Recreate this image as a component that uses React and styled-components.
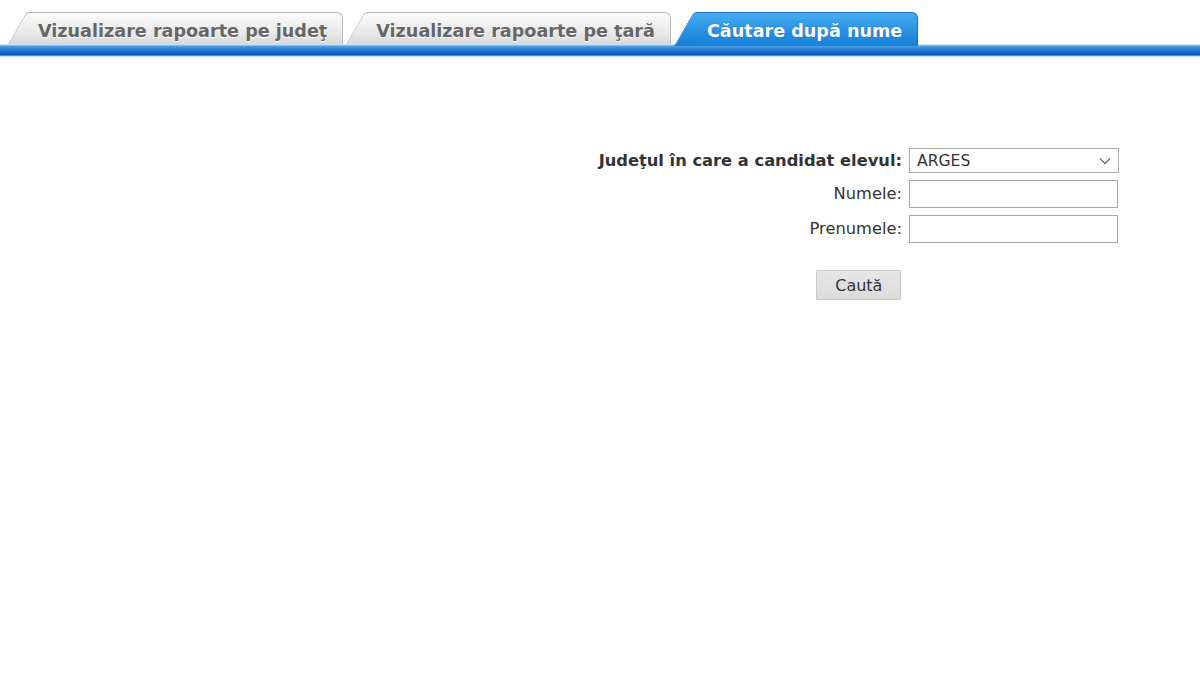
import styled, { createGlobalStyle } from "styled-components";

const GlobalStyle = createGlobalStyle`
  html, body {
    margin: 0;
    padding: 0;
    background: #ffffff;
    font-family: "DejaVu Sans", Verdana, sans-serif;
  }
`;

const tabs = [
  { id: "judet", label: "Vizualizare rapoarte pe judeţ" },
  { id: "tara", label: "Vizualizare rapoarte pe ţară" },
  { id: "nume", label: "Căutare după nume", active: true },
];

function Chevron() {
  return (
    <svg width="12" height="8" viewBox="0 0 12 8" fill="none">
      <path d="M1 1.5l5 5 5-5" stroke="#6d6d6d" strokeWidth="1.3" />
    </svg>
  );
}

export default function App() {
  return (
    <Page>
      <GlobalStyle />
      <TabStrip>
        {tabs.map((t) => (
          <Tab key={t.id} $active={t.active}>
            {t.label}
          </Tab>
        ))}
      </TabStrip>
      <Bar />

      <FormArea>
        <FormGrid>
          <Label $bold>Judeţul în care a candidat elevul:</Label>
          <SelectWrap>
            <Select defaultValue="ARGES">
              <option>ARGES</option>
            </Select>
            <Arrow>
              <Chevron />
            </Arrow>
          </SelectWrap>

          <Label>Numele:</Label>
          <Input type="text" />

          <Label>Prenumele:</Label>
          <Input type="text" />

          <ButtonRow>
            <Button>Caută</Button>
          </ButtonRow>
        </FormGrid>
      </FormArea>
    </Page>
  );
}

const Page = styled.div`
  width: 100%;
  min-height: 675px;
  padding-top: 12px;
  box-sizing: border-box;
`;

const TabStrip = styled.div`
  display: flex;
  align-items: flex-end;
  gap: 3px;
  padding-left: 8px;
  height: 32px;
`;

const Tab = styled.div`
  position: relative;
  z-index: ${({ $active }) => ($active ? 1 : 0)};
  height: ${({ $active }) => ($active ? "34px" : "32px")};
  margin-bottom: ${({ $active }) => ($active ? "-2px" : "0")};
  padding: ${({ $active }) => ($active ? "0 16px 2px 33px" : "0 16px 0 30px")};
  box-sizing: border-box;
  display: flex;
  align-items: center;
  padding-top: 5px;
  font-family: "DejaVu Sans", Verdana, sans-serif;
  font-weight: bold;
  font-size: 17.6px;
  white-space: nowrap;
  color: ${({ $active }) => ($active ? "#ffffff" : "#666666")};
  text-shadow: ${({ $active }) =>
    $active ? "0 0 1px rgba(0,60,130,0.4)" : "0 1px 0 #ffffff"};

  &::before,
  &::after {
    content: "";
    position: absolute;
    top: 0;
    bottom: 0;
    z-index: -1;
    box-sizing: border-box;
    background: ${({ $active }) =>
      $active
        ? "linear-gradient(#48aef0 0%, #2d95e6 45%, #1580d8 100%)"
        : "linear-gradient(#fbfbfb 0%, #ededed 50%, #d9d9d9 100%)"};
    border-color: ${({ $active }) => ($active ? "#1b6fc4" : "#b8b8b8")};
    border-style: solid;
  }

  &::before {
    left: 0;
    width: 44px;
    border-width: 1px 0 0 1px;
    border-top-left-radius: 4px;
    transform-origin: bottom left;
    transform: skewX(-30deg);
  }

  &::after {
    left: 22px;
    right: 0;
    border-width: 1px 1px 0 0;
    border-top-right-radius: 6px;
  }
`;

const Bar = styled.div`
  height: 13px;
  background: linear-gradient(
    #c7def3 0px,
    #c7def3 1px,
    #4d9fe2 2px,
    #2a86d8 5px,
    #1470cb 8px,
    #0b5bb5 10px,
    #0b58b1 11px,
    #a8ccee 12px,
    #e2eefa 13px
  );
`;

const FormArea = styled.div`
  display: flex;
  justify-content: flex-end;
  padding: 91px 81px 0 0;
`;

const FormGrid = styled.div`
  display: grid;
  grid-template-columns: auto 210px;
  column-gap: 7px;
  row-gap: 7px;
  align-items: center;
`;

const Label = styled.label`
  justify-self: end;
  font-family: "DejaVu Sans", Verdana, sans-serif;
  font-size: 16.3px;
  line-height: 20px;
  font-weight: ${({ $bold }) => ($bold ? "bold" : "normal")};
  color: #333333;
`;

const SelectWrap = styled.div`
  position: relative;
  width: 210px;
  height: 25px;
`;

const Select = styled.select`
  appearance: none;
  width: 100%;
  height: 100%;
  margin: 0;
  padding: 0 24px 0 7px;
  border: 1px solid #a9a9a9;
  border-radius: 0;
  background: #ffffff;
  font-family: "DejaVu Sans", Verdana, sans-serif;
  font-size: 15.6px;
  color: #333333;
  outline: none;
`;

const Arrow = styled.span`
  position: absolute;
  right: 8px;
  top: 9px;
  display: flex;
  pointer-events: none;
`;

const Input = styled.input`
  width: 209px;
  height: 28px;
  margin: 0;
  padding: 0 4px;
  box-sizing: border-box;
  border: 1px solid #a6a6a6;
  background: #ffffff;
  outline: none;
`;

const ButtonRow = styled.div`
  grid-column: 1 / span 2;
  display: flex;
  justify-content: center;
  padding-top: 20px;
`;

const Button = styled.button`
  width: 85px;
  height: 30px;
  border: 1px solid #cacaca;
  border-radius: 1px;
  background: linear-gradient(#e6e6e6, #dcdcdc);
  font-family: "DejaVu Sans", Verdana, sans-serif;
  font-size: 16px;
  color: #333333;
  cursor: pointer;
`;
